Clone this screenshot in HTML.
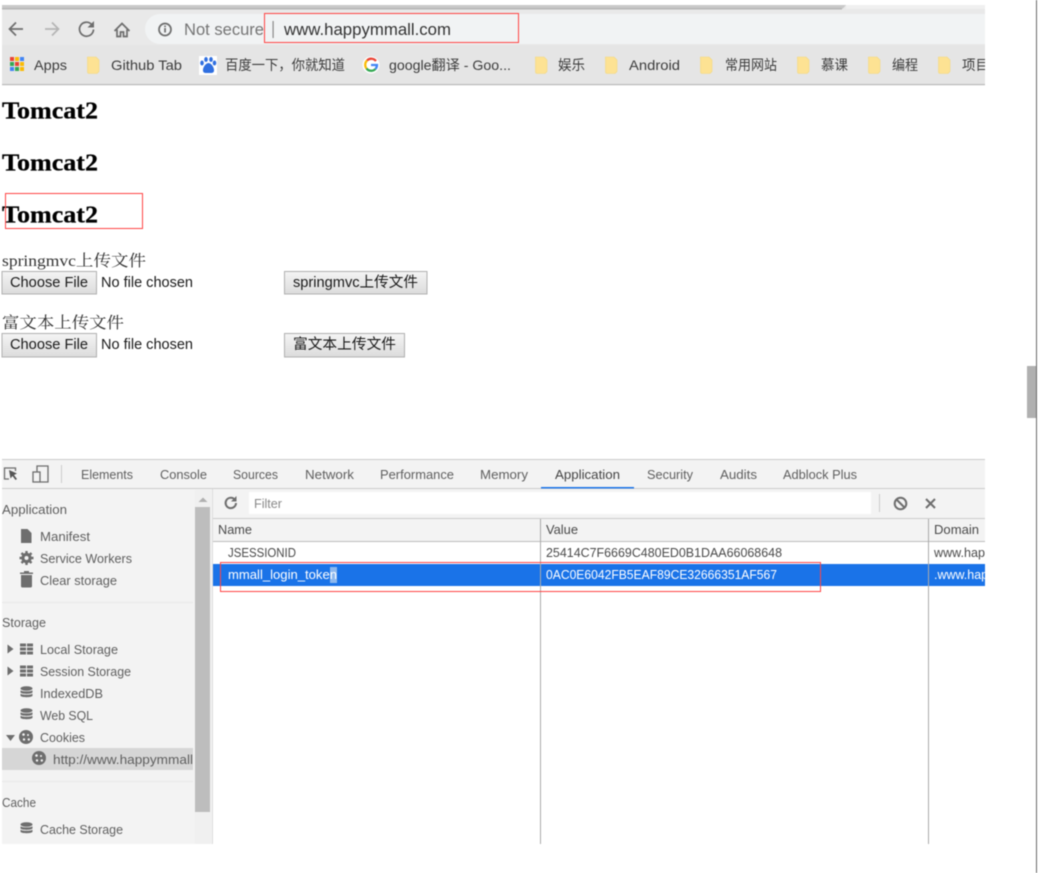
<!DOCTYPE html>
<html><head><meta charset="utf-8"><style>
html,body{margin:0;padding:0;background:#fff;width:1057px;height:873px;overflow:hidden}
svg{display:block;filter:blur(.4px)}
.u{font-family:"Liberation Sans","Noto Sans CJK SC",sans-serif}
.s{font-size:13px;fill:#5f5f5f}
.tb{font-size:13px;fill:#5f5f5f}
.r{font-size:13px;fill:#4a4a4a}
.w{font-size:13px;fill:#fff}
.b{font-size:14px;fill:#3c3c3c}
.h{font-family:"Liberation Serif",serif;font-weight:bold;font-size:24px;fill:#000;stroke:#000;stroke-width:.25px}
.p{font-family:"Liberation Serif","Noto Serif CJK SC",serif;font-size:16px;fill:#333}
.f{font-size:14.5px;fill:#1a1a1a}
.i{fill:#6e6e6e}
</style></head><body>
<svg width="1057" height="873" viewBox="0 0 1057 873" xmlns="http://www.w3.org/2000/svg">
<defs>
<linearGradient id="g" x1="0" y1="0" x2="0" y2="1"><stop offset="0" stop-color="#f4f4f4"/><stop offset="1" stop-color="#dcdcdc"/></linearGradient>
<clipPath id="c"><rect x="0" y="0" width="985" height="873"/></clipPath>
<g id="fd"><path d="M1.500 0h8.500l3 3v11.500l-2 2h-8a1.500 1.500 0 0 1-1.500-1.500V1.500A1.500 1.500 0 0 1 1.500 0z" fill="#fde293" stroke="#f3d77f" stroke-width=".6"/></g>
<g id="db"><ellipse cx="6.500" cy="2.500" rx="6" ry="2.300"/><path d="M.5 4.200c1 1.600 11 1.600 12 0v2.200c-1 1.900-11 1.900-12 0zM.5 7.600c1 1.600 11 1.600 12 0v2.200c-1 1.900-11 1.900-12 0z"/></g>
<g id="gr"><path d="M0 0h6v3H0zM7 0h6v3H7zM0 4h6v3H0zM7 4h6v3H7zM0 8h6v3H0zM7 8h6v3H7z"/></g>
<g id="ck"><circle cx="7" cy="7" r="7"/><circle cx="4.500" cy="4.500" r="1.300" fill="#f3f3f3"/><circle cx="9" cy="5" r="1" fill="#f3f3f3"/><circle cx="5" cy="9.500" r="1.200" fill="#f3f3f3"/><circle cx="9.800" cy="9.500" r="1.200" fill="#f3f3f3"/></g>
</defs>
<rect width="1057" height="873" fill="#fff"/>

<!-- browser chrome -->
<rect x="2" y="5" width="983" height="80" fill="#e9e9e9"/>
<path d="M2 5H846l-3 3.500H2z" fill="#c9c9c9"/>
<rect x="2" y="8" width="840" height="1.500" fill="#b5b5b5"/>
<rect x="846" y="5" width="139" height="4" fill="#f0f0f0"/>
<path d="M160 14H985V44H160a15 15 0 0 1 0-30z" fill="#f1f3f4"/>
<rect x="2" y="45" width="983" height="39" fill="#e5e5e5"/>
<rect x="2" y="84" width="983" height="1.200" fill="#b9b9b9"/>

<g fill="none" stroke="#6d6d6d" stroke-width="1.700">
<path d="M23 29H10M16 22.500L9.500 29l6.500 6.500"/>
<path d="M45 29H58M52 22.500l6.500 6.500-6.500 6.500" stroke="#b5b5b5"/>
<path d="M93.500 29.500a7 7 0 1 1-2-5.200"/>
<path d="M114.500 31l7.500-7.500 7.500 7.500M117 29.500v7h3.500v-4.500h3v4.500h3.500v-7"/>
<circle cx="165" cy="29.500" r="6"/>
</g>
<path d="M94 21v6.500h-6.500z" fill="#6d6d6d"/>
<rect x="164.200" y="28" width="1.700" height="4.500" fill="#6d6d6d"/><rect x="164.200" y="25.500" width="1.700" height="1.600" fill="#6d6d6d"/>
<text class="u" x="184" y="35" font-size="17" fill="#757575" textLength="80" lengthAdjust="spacingAndGlyphs">Not secure</text>
<rect x="272.500" y="21" width="1.200" height="17" fill="#8a8a8a"/>
<text class="u" x="284" y="35" font-size="17" fill="#333" textLength="167" lengthAdjust="spacingAndGlyphs">www.happymmall.com</text>

<!-- bookmarks -->
<g>
<rect x="10" y="57" width="4" height="4" fill="#ea4335"/><rect x="15" y="57" width="4" height="4" fill="#fbbc05"/><rect x="20" y="57" width="4" height="4" fill="#4285f4"/>
<rect x="10" y="62" width="4" height="4" fill="#34a853"/><rect x="15" y="62" width="4" height="4" fill="#ea4335"/><rect x="20" y="62" width="4" height="4" fill="#fbbc05"/>
<rect x="10" y="67" width="4" height="4" fill="#4285f4"/><rect x="15" y="67" width="4" height="4" fill="#34a853"/><rect x="20" y="67" width="4" height="4" fill="#fbbc05"/>
</g>
<rect x="199" y="56" width="18" height="19" fill="#fff"/>
<g fill="#2f6fe0"><ellipse cx="202" cy="63" rx="1.800" ry="2.500"/><ellipse cx="206" cy="59.500" rx="1.800" ry="2.500"/><ellipse cx="211" cy="59.500" rx="1.800" ry="2.500"/><ellipse cx="214.500" cy="63" rx="1.800" ry="2.500"/><path d="M208.500 63c3 0 6 5 5.500 8-.5 2.500-3.500 2-5.500 2s-5 .5-5.500-2c-.5-3 2.500-8 5.500-8z"/></g>
<circle cx="371" cy="65" r="8.500" fill="#fff"/>
<g fill="none" stroke-width="2.300"><path d="M376 61a6 6 0 0 0-9-.5" stroke="#ea4335"/><path d="M367 60.500a6 6 0 0 0-.5 8" stroke="#fbbc05"/><path d="M366.500 68.500a6 6 0 0 0 9 .5" stroke="#34a853"/><path d="M375.500 69a6 6 0 0 0 1.500-4h-6" stroke="#4285f4"/></g>
<use href="#fd" x="86" y="57"/><use href="#fd" x="534" y="57"/><use href="#fd" x="604" y="57"/><use href="#fd" x="699" y="57"/><use href="#fd" x="796" y="57"/><use href="#fd" x="867" y="57"/><use href="#fd" x="937" y="57"/>
<g class="u" clip-path="url(#c)">
<text class="b" x="34" y="70" textLength="33" lengthAdjust="spacingAndGlyphs">Apps</text>
<text class="b" x="111" y="70" textLength="71" lengthAdjust="spacingAndGlyphs">Github Tab</text>
<text class="b" x="225" y="70" textLength="120" lengthAdjust="spacingAndGlyphs">百度一下，你就知道</text>
<text class="b" x="389" y="70" textLength="122" lengthAdjust="spacingAndGlyphs">google翻译 - Goo...</text>
<text class="b" x="558" y="70" textLength="27" lengthAdjust="spacingAndGlyphs">娱乐</text>
<text class="b" x="629" y="70" textLength="51" lengthAdjust="spacingAndGlyphs">Android</text>
<text class="b" x="725" y="70" textLength="52" lengthAdjust="spacingAndGlyphs">常用网站</text>
<text class="b" x="821" y="70" textLength="27" lengthAdjust="spacingAndGlyphs">慕课</text>
<text class="b" x="892" y="70" textLength="26" lengthAdjust="spacingAndGlyphs">编程</text>
<text class="b" x="962" y="70" textLength="27" lengthAdjust="spacingAndGlyphs">项目</text>
</g>

<!-- page -->
<text class="h" x="2" y="118.500" textLength="96" lengthAdjust="spacingAndGlyphs">Tomcat2</text>
<text class="h" x="2" y="170.500" textLength="96" lengthAdjust="spacingAndGlyphs">Tomcat2</text>
<text class="h" x="2" y="222.500" textLength="96" lengthAdjust="spacingAndGlyphs">Tomcat2</text>
<text class="p" x="2" y="266" textLength="144" lengthAdjust="spacingAndGlyphs">springmvc上传文件</text>
<text class="p" x="2" y="328" textLength="122" lengthAdjust="spacingAndGlyphs">富文本上传文件</text>

<rect x="2" y="271.500" width="94.500" height="22.500" fill="url(#g)" stroke="#b0b0b0"/>
<text class="u f" x="10" y="287" textLength="78" lengthAdjust="spacingAndGlyphs" fill="#222">Choose File</text>
<text class="u f" x="101" y="287" textLength="92" lengthAdjust="spacingAndGlyphs">No file chosen</text>
<rect x="284.500" y="271.500" width="142.500" height="22.500" fill="url(#g)" stroke="#b0b0b0"/>
<text class="u f" x="293" y="287" textLength="125" lengthAdjust="spacingAndGlyphs">springmvc上传文件</text>
<rect x="2" y="333.500" width="94.500" height="23.500" fill="url(#g)" stroke="#b0b0b0"/>
<text class="u f" x="10" y="349" textLength="78" lengthAdjust="spacingAndGlyphs">Choose File</text>
<text class="u f" x="101" y="349" textLength="92" lengthAdjust="spacingAndGlyphs">No file chosen</text>
<rect x="284.500" y="333.500" width="120" height="23.500" fill="url(#g)" stroke="#b0b0b0"/>
<text class="u f" x="293" y="349" textLength="103" lengthAdjust="spacingAndGlyphs">富文本上传文件</text>

<!-- right scrollbar -->
<rect x="1027" y="366" width="9" height="52" fill="#b0b0b0"/>
<rect x="1036" y="0" width="1" height="873" fill="#6a6a6a"/>

<!-- devtools -->
<rect x="2" y="459" width="983" height="385" fill="#f3f3f3"/>
<rect x="2" y="459" width="983" height="1" fill="#ccc"/>
<rect x="2" y="488" width="983" height="1" fill="#ccc"/>
<rect x="213" y="519" width="772" height="325" fill="#fff"/>
<rect x="213" y="519" width="772" height="22" fill="#f3f3f3"/>
<rect x="213" y="518" width="772" height="1" fill="#ccc"/>
<rect x="213" y="541" width="772" height="1" fill="#bdbdbd"/>
<rect x="212" y="489" width="1" height="355" fill="#ddd"/>
<rect x="249" y="492" width="622" height="22" fill="#fff"/>
<rect x="879" y="494" width="1" height="18" fill="#ccc"/>

<rect x="213" y="564" width="772" height="22" fill="#1a73e8"/>
<rect x="330" y="567" width="7" height="16" fill="#8db8ee"/>
<rect x="540" y="519" width="1" height="325" fill="#aaa"/>
<rect x="928" y="519" width="1" height="325" fill="#aaa"/>

<!-- devtools top icons -->
<g fill="none" stroke="#6e6e6e" stroke-width="1.300">
<path d="M9 479H4.500v-11h11v3"/>
<rect x="33" y="472" width="7" height="10"/>
<path d="M37 472v-6h11v16h-8"/>
</g>
<path d="M9 470l8 3.500-3 1.500 3 4-1.500 1-3-4-2 2.500z" fill="#555"/>
<rect x="61" y="465" width="1" height="18" fill="#ccc"/>

<g class="u">
<text class="tb" x="81" y="479" textLength="52" lengthAdjust="spacingAndGlyphs">Elements</text>
<text class="tb" x="160" y="479" textLength="47" lengthAdjust="spacingAndGlyphs">Console</text>
<text class="tb" x="233" y="479" textLength="45" lengthAdjust="spacingAndGlyphs">Sources</text>
<text class="tb" x="305" y="479" textLength="49" lengthAdjust="spacingAndGlyphs">Network</text>
<text class="tb" x="380" y="479" textLength="74" lengthAdjust="spacingAndGlyphs">Performance</text>
<text class="tb" x="480" y="479" textLength="48" lengthAdjust="spacingAndGlyphs">Memory</text>
<text class="tb" x="555" y="479" textLength="65" lengthAdjust="spacingAndGlyphs" style="fill:#444">Application</text>
<text class="tb" x="647" y="479" textLength="46" lengthAdjust="spacingAndGlyphs">Security</text>
<text class="tb" x="720" y="479" textLength="37" lengthAdjust="spacingAndGlyphs">Audits</text>
<text class="tb" x="783" y="479" textLength="74" lengthAdjust="spacingAndGlyphs">Adblock Plus</text>
</g>
<rect x="541" y="487" width="93" height="1.500" fill="#1a73e8"/>

<!-- filter toolbar icons -->
<g fill="none" stroke="#6e6e6e">
<path d="M236 503a5.200 5.200 0 1 1-1.600-3.800" stroke-width="2"/>
<circle cx="900.500" cy="503.500" r="5.800" stroke-width="2"/>
<path d="M896.500 499.500l8 8" stroke-width="2"/>
<path d="M926 499l9 9M935 499l-9 9" stroke-width="2"/>
</g>
<path d="M236.500 496v5.500H231z" fill="#6e6e6e"/>
<text class="u" x="254" y="508" font-size="13" fill="#8a8a8a" textLength="28" lengthAdjust="spacingAndGlyphs">Filter</text>

<!-- table text -->
<g class="u" clip-path="url(#c)">
<text class="r" x="218" y="534" textLength="34" lengthAdjust="spacingAndGlyphs">Name</text>
<text class="r" x="546" y="534" textLength="32" lengthAdjust="spacingAndGlyphs">Value</text>
<text class="r" x="934" y="534" textLength="45" lengthAdjust="spacingAndGlyphs">Domain</text>
<text class="r" x="228" y="557" textLength="68" lengthAdjust="spacingAndGlyphs">JSESSIONID</text>
<text class="r" x="546" y="557" textLength="236" lengthAdjust="spacingAndGlyphs">25414C7F6669C480ED0B1DAA66068648</text>
<text class="r" x="934" y="557" textLength="58" lengthAdjust="spacingAndGlyphs">www.happ</text>
<text class="w" x="228" y="579" textLength="109" lengthAdjust="spacingAndGlyphs">mmall_login_token</text>
<text class="w" x="546" y="579" textLength="231" lengthAdjust="spacingAndGlyphs">0AC0E6042FB5EAF89CE32666351AF567</text>
<text class="w" x="934" y="579" textLength="61" lengthAdjust="spacingAndGlyphs">.www.happ</text>
</g>

<!-- sidebar -->
<rect x="195" y="490" width="16" height="354" fill="#f0f0f0"/>
<rect x="195" y="507" width="15" height="305" fill="#bdbdbd"/>
<path d="M198.500 502l4.500-4.500 4.500 4.500z" fill="#b0b0b0"/>
<rect x="2" y="602" width="191" height="1" fill="#e8e8e8"/>
<rect x="2" y="781" width="191" height="1" fill="#e8e8e8"/>
<rect x="2" y="748" width="191" height="22" fill="#d6d6d6"/>

<g class="u">
<text class="s" x="2" y="514" textLength="65" lengthAdjust="spacingAndGlyphs">Application</text>
<text class="s" x="40" y="541" textLength="50" lengthAdjust="spacingAndGlyphs">Manifest</text>
<text class="s" x="40" y="563" textLength="92" lengthAdjust="spacingAndGlyphs">Service Workers</text>
<text class="s" x="40" y="585" textLength="77" lengthAdjust="spacingAndGlyphs">Clear storage</text>
<text class="s" x="2" y="627" textLength="44" lengthAdjust="spacingAndGlyphs">Storage</text>
<text class="s" x="40" y="654" textLength="78" lengthAdjust="spacingAndGlyphs">Local Storage</text>
<text class="s" x="40" y="676" textLength="91" lengthAdjust="spacingAndGlyphs">Session Storage</text>
<text class="s" x="40" y="698" textLength="63" lengthAdjust="spacingAndGlyphs">IndexedDB</text>
<text class="s" x="40" y="720" textLength="53" lengthAdjust="spacingAndGlyphs">Web SQL</text>
<text class="s" x="40" y="742" textLength="45" lengthAdjust="spacingAndGlyphs">Cookies</text>
<text class="s" x="53" y="764" textLength="140" lengthAdjust="spacingAndGlyphs">http://www.happymmall</text>
<text class="s" x="2" y="807" textLength="34" lengthAdjust="spacingAndGlyphs">Cache</text>
<text class="s" x="40" y="834" textLength="83" lengthAdjust="spacingAndGlyphs">Cache Storage</text>
</g>

<!-- sidebar icons -->
<g class="i">
<path d="M21 529h6.500l4 4v10H21z"/>
<circle cx="26.500" cy="558" r="5.200"/>
<g stroke="#6e6e6e" stroke-width="2.400"><path d="M26.500 551v14M19.500 558h14M21.500 553l10 10M31.500 553l-10 10"/></g>
<circle cx="26.500" cy="558" r="2" fill="#f3f3f3"/>
<path d="M21 575h11v11a1.500 1.500 0 0 1-1.500 1.500h-8A1.500 1.500 0 0 1 21 586zM20 572.500h13v1.500H20zM24 571h5v1.500h-5z"/>
<use href="#gr" x="20" y="643.500"/>
<use href="#gr" x="20" y="665.500"/>
<use href="#db" x="20" y="686"/>
<use href="#db" x="20" y="708"/>
<use href="#ck" x="19" y="730"/>
<use href="#ck" x="32" y="751"/>
<use href="#db" x="20" y="822"/>
<path d="M7.500 645l6 4.500-6 4.500zM7.500 667l6 4.500-6 4.500z" transform="translate(0 -.5)"/>
<path d="M6 735h9l-4.500 6z"/>
</g>

<!-- annotation rectangles -->
<g fill="none" stroke="#f44" stroke-width="1">
<rect x="264.500" y="13.500" width="254" height="29"/>
<rect x="5.500" y="193.500" width="137" height="35"/>
<rect x="220.500" y="562.500" width="600" height="29"/>
</g>
</svg>
</body></html>
